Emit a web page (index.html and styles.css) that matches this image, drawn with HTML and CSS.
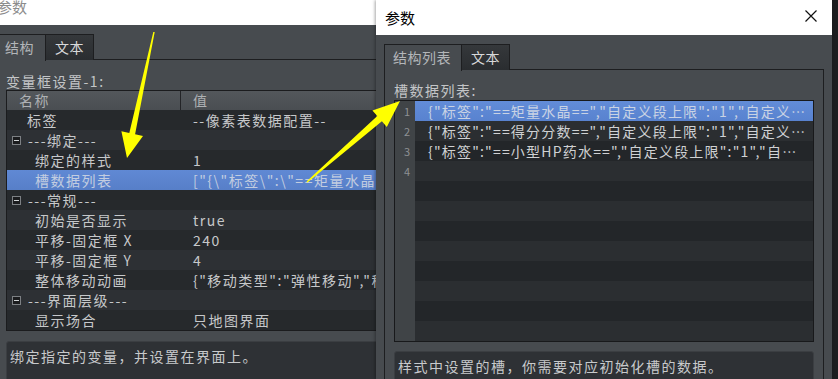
FILE: index.html
```html
<!DOCTYPE html>
<html>
  <head>
    <meta charset="UTF-8">
    <title>参数</title>
    <link rel="stylesheet" href="styles.css">
  </head>
  <body>
    <div class="desk">
      <div class="win win-back">
        <div class="titlebar titlebar-back">参数</div>
        <div class="win-body">
          <div class="tabs">
            <div class="tab tab-active">结构</div>
            <div class="tab">文本</div>
          </div>
          <div class="panel">
            <div class="caption">变量框设置-1:</div>
            <div class="grid">
              <div class="grid-head">
                <div class="head-name">名称</div>
                <div class="head-value">值</div>
              </div>
              <div class="grid-row">
                <div class="cell-name top">标签</div>
                <div class="cell-value">--像素表数据配置--</div>
              </div>
              <div class="grid-row group">
                <div class="cell-name"><span class="fold"></span>---绑定---</div>
                <div class="cell-value"></div>
              </div>
              <div class="grid-row">
                <div class="cell-name child">绑定的样式</div>
                <div class="cell-value">1</div>
              </div>
              <div class="grid-row selected">
                <div class="cell-name child">槽数据列表</div>
                <div class="cell-value">["{\"标签\":\"==矩量水晶==\",\"自定义段上限\":\"1\"}"]</div>
              </div>
              <div class="grid-row group">
                <div class="cell-name"><span class="fold"></span>---常规---</div>
                <div class="cell-value"></div>
              </div>
              <div class="grid-row">
                <div class="cell-name child">初始是否显示</div>
                <div class="cell-value">true</div>
              </div>
              <div class="grid-row">
                <div class="cell-name child">平移-固定框 X</div>
                <div class="cell-value">240</div>
              </div>
              <div class="grid-row">
                <div class="cell-name child">平移-固定框 Y</div>
                <div class="cell-value">4</div>
              </div>
              <div class="grid-row">
                <div class="cell-name child">整体移动动画</div>
                <div class="cell-value">{"移动类型":"弹性移动","移动时间":"0.3"}</div>
              </div>
              <div class="grid-row group">
                <div class="cell-name"><span class="fold"></span>---界面层级---</div>
                <div class="cell-value"></div>
              </div>
              <div class="grid-row">
                <div class="cell-name child">显示场合</div>
                <div class="cell-value">只地图界面</div>
              </div>
            </div>
            <div class="hint">绑定指定的变量，并设置在界面上。</div>
          </div>
        </div>
      </div>

      <div class="win win-front">
        <div class="titlebar titlebar-front">
          <span>参数</span>
          <svg class="close" width="12" height="12" viewBox="0 0 12 12">
            <path d="M0.5 0.5 L11.5 11.5 M11.5 0.5 L0.5 11.5" stroke="#111" stroke-width="1.2" fill="none"/>
          </svg>
        </div>
        <div class="win-body front-body">
          <div class="tabs">
            <div class="tab tab-active">结构列表</div>
            <div class="tab">文本</div>
          </div>
          <div class="panel front-panel">
            <div class="caption">槽数据列表:</div>
            <div class="list">
              <div class="gutter">
                <div>1</div><div>2</div><div>3</div><div>4</div>
              </div>
              <div class="lines">
                <div class="line selected">{"标签":"==矩量水晶==","自定义段上限":"1","自定义段下限":"0"}</div>
                <div class="line">{"标签":"==得分分数==","自定义段上限":"1","自定义段下限":"0"}</div>
                <div class="line">{"标签":"==小型HP药水==","自定义段上限":"1","自定义段下限":"0"}</div>
                <div class="line"></div>
                <div class="line"></div>
                <div class="line"></div>
                <div class="line"></div>
                <div class="line"></div>
                <div class="line"></div>
                <div class="line"></div>
                <div class="line"></div>
                <div class="line"></div>
              </div>
            </div>
            <div class="hint">样式中设置的槽，你需要对应初始化槽的数据。</div>
          </div>
        </div>
      </div>
    </div>

    <svg class="arrows" width="838" height="379" viewBox="0 0 838 379">
      <polygon fill="#ffff00" points="153.3,31.9 154.7,32.1 135.1,134.2 143,135.9 127,158 121.4,131.3 129.3,133"/>
      <polygon fill="#ffff00" points="306.5,181.5 307.5,182.5 381.9,121.3 386.8,127 400,101 372.4,110.4 377.3,116.1"/>
    </svg>
  </body>
</html>
```

FILE: styles.css
```css
body {
    margin: 0;
    padding: 0;
    background-color: #1d1e20;
    font-family: "Noto Sans CJK SC", sans-serif;
    font-size: 14px;
    letter-spacing: 1.5px;
    color: #c6c8ca;
    overflow: hidden;
}

.desk {
    display: flex;
    flex-direction: row;
    height: 379px;
}

.win {
    display: flex;
    flex-direction: column;
    height: 379px;
    overflow: hidden;
    background-color: #474b4f;
}

.win-back {
    width: 377px;
    margin-left: -1px;
    flex-shrink: 0;
}

.win-front {
    width: 456px;
    flex-shrink: 0;
    box-shadow: -1px 0 3px rgba(0, 0, 0, 0.35);
    z-index: 1;
}

.titlebar {
    background-color: #fff;
    font-size: 15px;
    letter-spacing: 0;
    flex-shrink: 0;
}

.titlebar-back {
    height: 25px;
    line-height: 13px;
    color: #8c8c8c;
    margin-left: -2px;
}

.titlebar-front {
    height: 35px;
    line-height: 33px;
    color: #000;
    display: flex;
    align-items: center;
    justify-content: space-between;
    padding: 0 15px 0 9px;
}

.close {
    display: block;
    margin-top: -3px;
}

.win-body {
    flex: 1;
    display: flex;
    flex-direction: column;
    padding-top: 9px;
}

.front-body {
    padding: 9px 8px 0 8px;
}

.tabs {
    display: flex;
    flex-direction: row;
    height: 26px;
    position: relative;
    z-index: 1;
}

.tab {
    height: 25px;
    line-height: 25px;
    padding: 0 9px 0 9px;
    border: 1px solid #1d1e20;
    border-left: none;
    border-bottom: none;
    background: linear-gradient(#35383b, #2a2d30);
    color: #d8d9da;
    letter-spacing: 0.5px;
}

.tab-active {
    border-left: 1px solid #1d1e20;
    background: #474b4f;
    color: #b3b6b9;
    height: 26px;
    padding-left: 5px;
    padding-right: 11px;
}

.front-body .tab-active {
    padding-left: 8px;
    padding-right: 10px;
}

.panel {
    flex: 1;
    border-top: 1px solid #1d1e20;
    border-left: 1px solid #1d1e20;
    margin-top: -1px;
    padding: 12px 0 0 6px;
}

.front-panel {
    border-right: 1px solid #1d1e20;
    padding: 11px 9px 0 9px;
}

.caption {
    height: 19px;
    line-height: 19px;
    color: #c3c5c7;
}

.win-back .caption {
    height: 18px;
}

.grid {
    width: 440px;
    border: 1px solid #1b1c1e;
    background-color: #26292c;
}

.grid-head {
    display: flex;
    height: 19px;
    line-height: 19px;
    background: linear-gradient(#53575b, #4a4e52);
    color: #aeb1b4;
}

.head-name {
    width: 161px;
    padding-left: 12px;
    border-right: 1px solid #232427;
}

.head-value {
    padding-left: 12px;
}

.grid-row {
    display: flex;
    height: 20px;
    line-height: 20px;
    white-space: nowrap;
    background-color: #26292c;
}

.grid-row:nth-child(odd) {
    background-color: #2d3034;
}

.grid-row.selected {
    background: linear-gradient(#6089d4, #577fc8);
    color: #c2cde0;
}

.cell-name {
    width: 174px;
    flex-shrink: 0;
    display: flex;
    align-items: center;
    padding-left: 5px;
    box-sizing: border-box;
}

.cell-name.top {
    padding-left: 20px;
}

.cell-name.child {
    padding-left: 28px;
}

.cell-value {
    padding-left: 12px;
    overflow: hidden;
}

.fold {
    width: 7px;
    height: 7px;
    margin-right: 7px;
    border: 1px solid #7d8084;
    background-color: #1b1c1e;
    position: relative;
    flex-shrink: 0;
}

.fold::after {
    content: "";
    position: absolute;
    left: 1px;
    top: 3px;
    width: 5px;
    height: 1px;
    background-color: #d0d2d4;
}

.hint {
    margin-top: 10px;
    height: 60px;
    border: 1px solid #3b3e42;
    border-radius: 3px;
    background-color: #2e3135;
    padding: 4px 0 0 3px;
    line-height: 20px;
    color: #c8cacc;
    white-space: nowrap;
}

.win-back .hint {
    width: 440px;
}

.front-panel .hint {
    margin-top: 9px;
}

.list {
    display: flex;
    border: 1px solid #18191b;
    background-color: #232629;
}

.gutter {
    width: 20px;
    flex-shrink: 0;
    background-color: #404447;
    color: #8e9194;
    font-size: 11px;
    letter-spacing: 0;
    text-align: right;
}

.gutter div {
    height: 20px;
    line-height: 20px;
    padding-right: 5px;
}

.lines {
    flex: 1;
    min-width: 0;
}

.line {
    height: 20px;
    line-height: 20px;
    padding: 0 7px 0 13px;
    white-space: nowrap;
    overflow: hidden;
    text-overflow: ellipsis;
    color: #cfd1d3;
    letter-spacing: 1.2px;
    background-color: #232629;
}

.line:nth-child(even) {
    background-color: #2b2e31;
}

.line.selected {
    background: linear-gradient(#628cd8, #5882cf);
    color: #c9d3e4;
}

.arrows {
    position: absolute;
    top: 0;
    left: 0;
    z-index: 2;
    pointer-events: none;
}
```
